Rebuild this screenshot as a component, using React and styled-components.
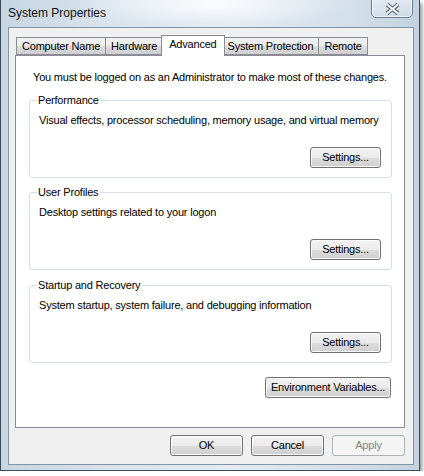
import React from "react";
import styled, { createGlobalStyle } from "styled-components";

const GlobalStyle = createGlobalStyle`
  html, body {
    margin: 0;
    padding: 0;
    background: #ffffff;
  }
  body {
    font-family: "Liberation Sans", Arial, sans-serif;
    font-size: 11px;
    letter-spacing: -0.2px;
    color: #000;
  }
`;

const Window = styled.div`
  position: relative;
  box-sizing: border-box;
  width: 420px;
  height: 471px;
  padding: 0 5px 5px 7px;
  border: 1px solid #3f4b57;
  border-top: none;
  background:
    radial-gradient(ellipse 140px 22px at 210px 4px, rgba(255, 255, 255, 0.85), rgba(255, 255, 255, 0) 100%),
    linear-gradient(90deg, #c6d6e4 0%, #dbe5ee 30%, #e4ebf2 55%, #d2dee9 85%, #c2d2e0 100%);
  box-shadow: 2px 3px 4px rgba(0, 0, 0, 0.45);
  display: flex;
  flex-direction: column;
`;

const TitleBar = styled.div`
  height: 27px;
  display: flex;
  align-items: center;
  box-sizing: border-box;
`;

const Title = styled.span`
  font-size: 12px;
  line-height: 14px;
  margin-top: -1px;
  letter-spacing: 0;
  color: #111;
`;

const CloseButton = styled.div`
  position: absolute;
  top: -3px;
  right: 6px;
  width: 42px;
  height: 21px;
  box-sizing: border-box;
  border: 1px solid #6e7d8c;
  border-radius: 0 0 5px 5px;
  background: linear-gradient(180deg, rgba(255, 255, 255, 0.5), rgba(220, 230, 240, 0.35));
  box-shadow: inset 0 0 0 1px rgba(255, 255, 255, 0.6);
  display: flex;
  align-items: center;
  justify-content: center;
  padding-top: 3px;
`;

const Client = styled.div`
  flex: 1;
  box-sizing: border-box;
  border: 1px solid #8393a2;
  background: #f0f0f0;
  display: flex;
  flex-direction: column;
`;

const TabStrip = styled.div`
  display: flex;
  align-items: flex-end;
  height: 20px;
  margin: 7px 0 0 7px;
`;

const Tab = styled.div`
  position: relative;
  box-sizing: border-box;
  height: ${(p) => (p.$active ? "21px" : "18px")};
  margin: ${(p) => (p.$active ? "0 -2px -1px -2px" : "0")};
  padding: 0 ${(p) => (p.$active ? "7px" : "5px")};
  border: 1px solid #898c95;
  border-bottom: ${(p) => (p.$active ? "none" : "1px solid #898c95")};
  border-left: ${(p) => (p.$first || p.$active ? "1px solid #898c95" : "none")};
  background: ${(p) =>
    p.$active
      ? "#ffffff"
      : "linear-gradient(180deg, #f2f2f2 0%, #ebebeb 50%, #dddddd 51%, #cfcfcf 100%)"};
  z-index: ${(p) => (p.$active ? 2 : 1)};
  font-size: 11px;
  line-height: ${(p) => (p.$active ? "17px" : "16px")};
  white-space: nowrap;
`;

const Panel = styled.div`
  box-sizing: border-box;
  height: 373px;
  margin: 0 8px 0 6px;
  border: 1px solid #898c95;
  background: #ffffff;
  padding: 14px 12px 0 13px;
  display: flex;
  flex-direction: column;
`;

const Intro = styled.div`
  line-height: 14px;
  margin-left: 4px;
  white-space: nowrap;
`;

const Group = styled.fieldset`
  margin: ${(p) => p.$gap || "7px"} 0 0 0;
  padding: 6px 10px 9px 9px;
  border: 1px solid #d5dfe5;
  border-radius: 3px;
  min-width: 0;
  display: flex;
  flex-direction: column;
`;

const Legend = styled.legend`
  padding: 0 2px 0 1px;
  margin-left: -2px;
  line-height: 14px;
  color: #000;
`;

const Description = styled.div`
  line-height: 14px;
  white-space: nowrap;
`;

const ButtonRow = styled.div`
  display: flex;
  justify-content: flex-end;
  gap: ${(p) => p.$gap || "0"};
  margin: ${(p) => p.$margin || "0"};
`;

const Button = styled.button`
  box-sizing: border-box;
  width: ${(p) => p.$width || "73px"};
  height: 21px;
  padding: 0;
  border: 1px solid ${(p) => (p.disabled ? "#adb2b5" : "#707070")};
  border-radius: 3px;
  background: ${(p) =>
    p.disabled
      ? "#f4f4f4"
      : "linear-gradient(180deg, #f2f2f2 0%, #ebebeb 50%, #dddddd 51%, #cfcfcf 100%)"};
  box-shadow: inset 0 0 0 1px ${(p) => (p.disabled ? "#f4f4f4" : "#fcfcfc")};
  font-family: "Liberation Sans", Arial, sans-serif;
  font-size: 11px;
  letter-spacing: -0.2px;
  line-height: 19px;
  color: ${(p) => (p.disabled ? "#838383" : "#000")};
`;

const CloseGlyph = () => (
  <svg width="17" height="12" viewBox="0 0 17 12">
    <g strokeLinecap="butt">
      <line x1="3" y1="1.5" x2="14" y2="10.5" stroke="#5b6670" strokeWidth="4.2" />
      <line x1="14" y1="1.5" x2="3" y2="10.5" stroke="#5b6670" strokeWidth="4.2" />
      <line x1="3" y1="1.5" x2="14" y2="10.5" stroke="#f4f6f8" strokeWidth="2.2" />
      <line x1="14" y1="1.5" x2="3" y2="10.5" stroke="#f4f6f8" strokeWidth="2.2" />
    </g>
  </svg>
);

const tabs = ["Computer Name", "Hardware", "Advanced", "System Protection", "Remote"];

const groups = [
  {
    title: "Performance",
    text: "Visual effects, processor scheduling, memory usage, and virtual memory",
    gap: "9px",
  },
  { title: "User Profiles", text: "Desktop settings related to your logon", gap: "7px" },
  {
    title: "Startup and Recovery",
    text: "System startup, system failure, and debugging information",
    gap: "8px",
  },
];

export default function App() {
  return (
    <>
      <GlobalStyle />
      <Window>
        <TitleBar>
          <Title>System Properties</Title>
        </TitleBar>
        <CloseButton>
          <CloseGlyph />
        </CloseButton>
        <Client>
          <TabStrip>
            {tabs.map((t, i) => (
              <Tab key={t} $first={i === 0} $active={t === "Advanced"}>
                {t}
              </Tab>
            ))}
          </TabStrip>
          <Panel>
            <Intro>You must be logged on as an Administrator to make most of these changes.</Intro>
            {groups.map((g) => (
              <Group key={g.title} $gap={g.gap}>
                <Legend>{g.title}</Legend>
                <Description>{g.text}</Description>
                <ButtonRow $margin="20px 0 0 0">
                  <Button $width="71px">Settings...</Button>
                </ButtonRow>
              </Group>
            ))}
            <ButtonRow $margin="14px 1px 0 0">
              <Button $width="126px">Environment Variables...</Button>
            </ButtonRow>
          </Panel>
          <ButtonRow $gap="8px" $margin="7px 8px 0 0">
            <Button>OK</Button>
            <Button>Cancel</Button>
            <Button disabled>Apply</Button>
          </ButtonRow>
        </Client>
      </Window>
    </>
  );
}
